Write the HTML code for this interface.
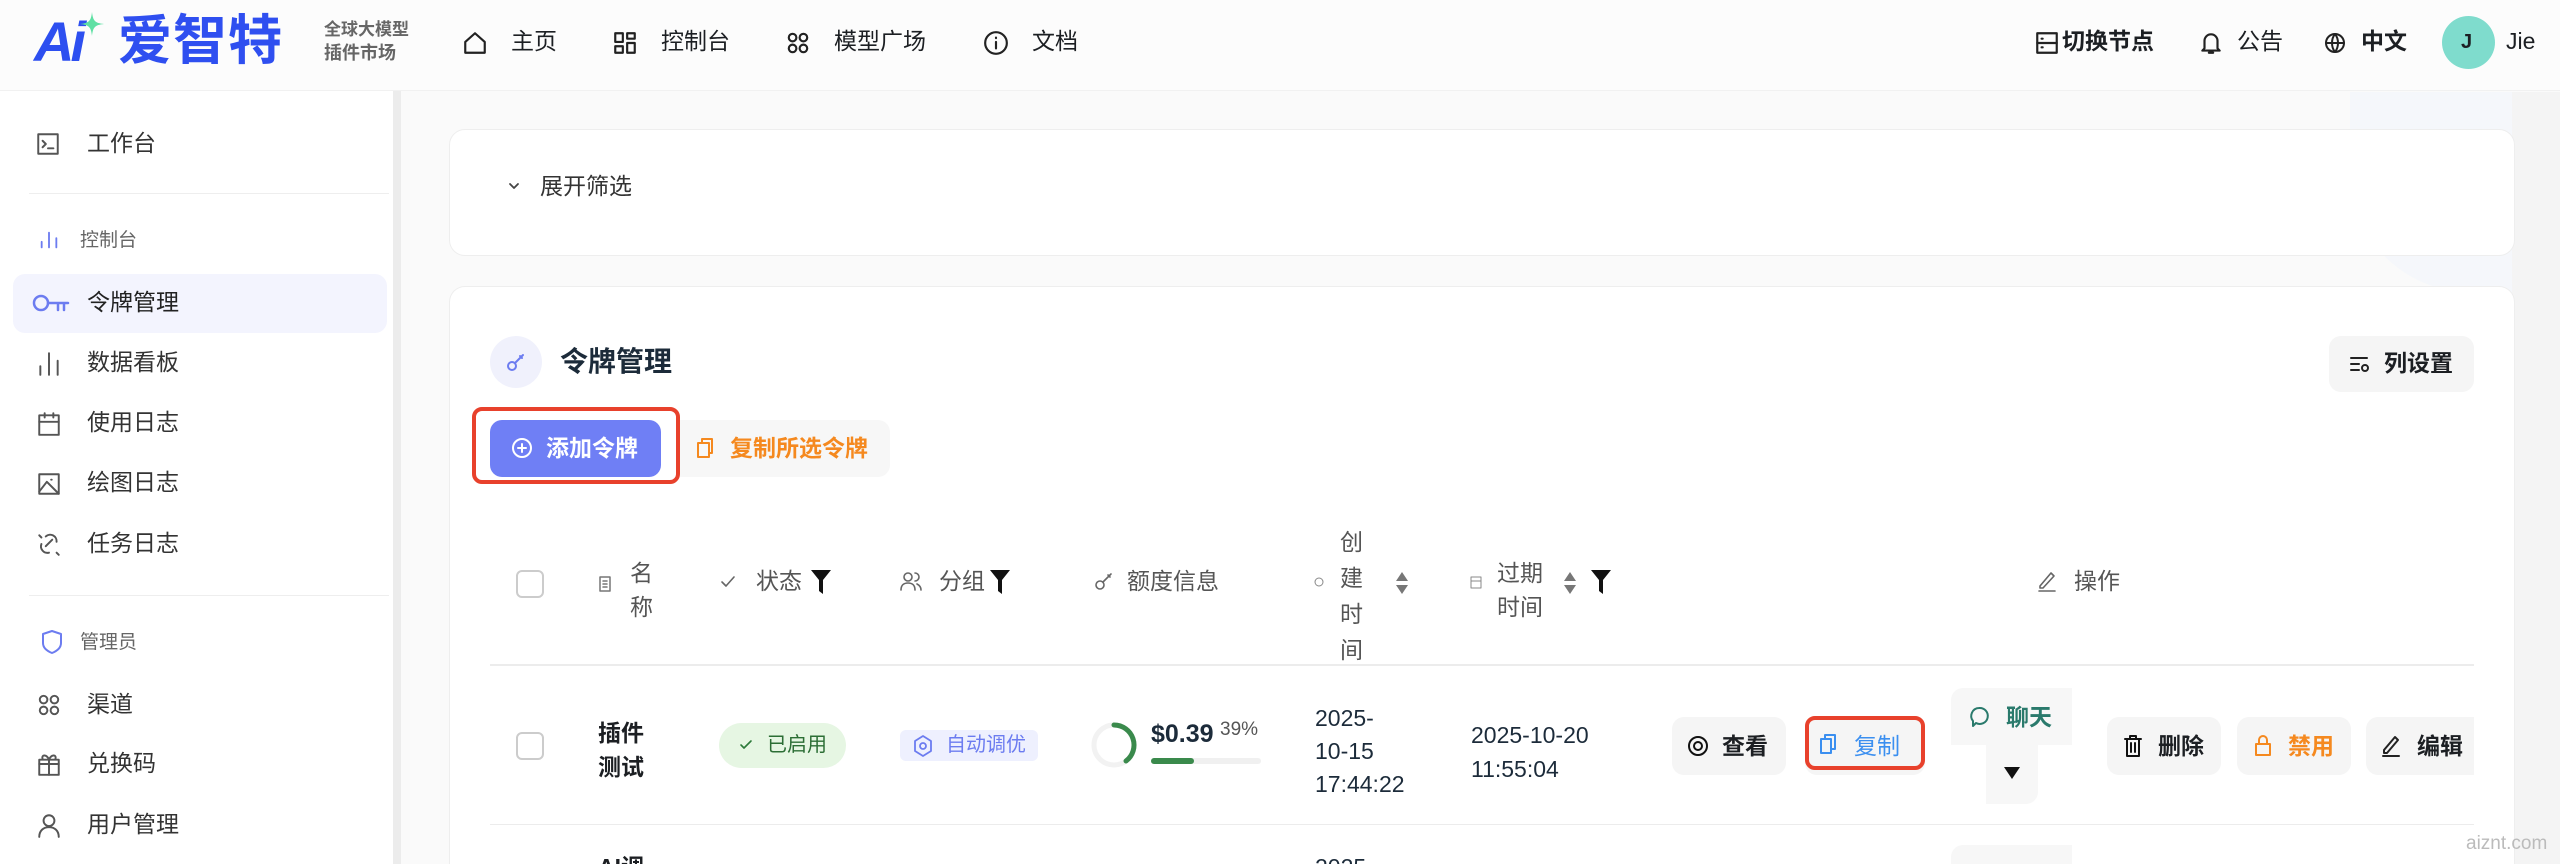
<!DOCTYPE html>
<html style="width:2560px;height:864px;overflow:hidden"><head><meta charset="utf-8"><style>
*{margin:0;padding:0;box-sizing:border-box}
body{width:2560px;height:864px;overflow:hidden;background:#fafafa;font-family:"Liberation Sans","Noto Sans CJK SC",sans-serif;color:#1c1f23;position:relative}
.a{position:absolute}
.t{position:absolute;font-size:23px;line-height:1;white-space:nowrap}
svg{position:absolute;fill:none;stroke-linecap:round;stroke-linejoin:round}
.btn{position:absolute;background:#f5f5f5;border-radius:12px}
</style></head><body>
<!-- header -->
<div class="a" style="left:0;top:0;width:2560px;height:91px;background:#fcfcfc;border-bottom:1px solid #f1f1f1"></div>
<div class="t" style="left:34px;top:14px;font-size:56px;font-weight:bold;font-style:italic;color:#2d4ff0;letter-spacing:-4px">Ai</div>
<svg style="left:80px;top:12px" width="24" height="24" viewBox="0 0 24 24"><path d="M12 0 C13 9 15 11 24 12 C15 13 13 15 12 24 C11 15 9 13 0 12 C9 11 11 9 12 0Z" fill="#5fe0a4" stroke="none"/></svg>
<div class="t" style="left:118px;top:14px;font-size:54px;font-weight:bold;color:#2f4ff0;letter-spacing:1px">爱智特</div>
<div class="t" style="left:324px;top:21px;font-size:17px;color:#666;font-weight:bold">全球大模型</div>
<div class="t" style="left:324px;top:44px;font-size:18px;color:#666;font-weight:bold">插件市场</div>
<svg style="left:462px;top:30px" width="26" height="26" viewBox="0 0 24 24" stroke="#222" stroke-width="2"><path d="M3 11 12 3l9 8v10H3z"/></svg>
<div class="t" style="left:511px;top:30px">主页</div>
<svg style="left:612px;top:30px" width="26" height="26" viewBox="0 0 24 24" stroke="#222" stroke-width="2"><rect x="3" y="3" width="7" height="8"/><rect x="14" y="3" width="7" height="5"/><rect x="3" y="15" width="7" height="6"/><rect x="14" y="12" width="7" height="9"/></svg>
<div class="t" style="left:661px;top:30px">控制台</div>
<svg style="left:785px;top:30px" width="26" height="26" viewBox="0 0 24 24" stroke="#222" stroke-width="2"><circle cx="7" cy="7" r="3.5"/><circle cx="17" cy="7" r="3.5"/><circle cx="7" cy="17" r="3.5"/><circle cx="17" cy="17" r="3.5"/></svg>
<div class="t" style="left:834px;top:30px">模型广场</div>
<svg style="left:983px;top:30px" width="26" height="26" viewBox="0 0 24 24" stroke="#222" stroke-width="2"><circle cx="12" cy="12" r="10"/><path d="M12 11v6M12 7v.5"/></svg>
<div class="t" style="left:1032px;top:30px">文档</div>
<svg style="left:2034px;top:30px" width="26" height="26" viewBox="0 0 24 24" stroke="#222" stroke-width="2"><rect x="3" y="3" width="18" height="18"/><path d="M3 12h18M7 8h1M7 16h1"/></svg>
<div class="t" style="left:2062px;top:30px;font-weight:bold">切换节点</div>
<svg style="left:2198px;top:29px" width="26" height="28" viewBox="0 0 24 24" stroke="#222" stroke-width="2"><path d="M6 17V10a6 6 0 0 1 12 0v7l2 2H4z M10 21h4"/></svg>
<div class="t" style="left:2237px;top:30px">公告</div>
<svg style="left:2323px;top:31px" width="24" height="24" viewBox="0 0 24 24" stroke="#222" stroke-width="2"><circle cx="12" cy="12" r="9"/><path d="M3 12h18M12 3c-4 5-4 13 0 18M12 3c4 5 4 13 0 18"/></svg>
<div class="t" style="left:2361px;top:30px;font-weight:bold">中文</div>
<div class="a" style="left:2442px;top:16px;width:53px;height:53px;border-radius:50%;background:#7fdccd"></div>
<div class="t" style="left:2461px;top:32px;font-size:20px;font-weight:bold">J</div>
<div class="t" style="left:2506px;top:30px">Jie</div>
<!-- sidebar -->
<div class="a" style="left:0;top:91px;width:401px;height:773px;background:#fff;border-right:8px solid #ececec"></div>
<div class="a" style="left:2350px;top:92px;width:210px;height:200px;background:#f5f7fb;border-radius:0 0 0 120px"></div>
<div class="a" style="left:2512px;top:92px;width:48px;height:772px;background:#f4f4f4"></div>
<svg style="left:35px;top:131px" width="26" height="26" viewBox="0 0 24 24" stroke="#555" stroke-width="1.8"><rect x="3" y="3" width="18" height="18"/><path d="M7 9l3 3-3 3M12 16h5"/></svg>
<div class="t" style="left:87px;top:132px;color:#333">工作台</div>
<div class="a" style="left:29px;top:193px;width:360px;height:1px;background:#eee"></div>
<svg style="left:38px;top:229px" width="22" height="22" viewBox="0 0 24 24" stroke="#6c7cf0" stroke-width="2"><path d="M4 20v-6M12 20V4M20 20v-10"/></svg>
<div class="t" style="left:80px;top:231px;font-size:19px;color:#666">控制台</div>
<div class="a" style="left:13px;top:274px;width:374px;height:59px;background:#f3f4fe;border-radius:12px"></div>
<svg style="left:32px;top:291px" width="38" height="26" viewBox="0 0 38 26" stroke="#6c7cf0" stroke-width="2.5"><circle cx="9" cy="12" r="7"/><path d="M16 12h20M26 12v7M32 12v7"/></svg>
<div class="t" style="left:87px;top:291px;color:#222">令牌管理</div>
<svg style="left:36px;top:351px" width="26" height="26" viewBox="0 0 24 24" stroke="#555" stroke-width="1.8"><path d="M4 22v-8M12 22V2M20 22V9"/></svg>
<div class="t" style="left:87px;top:351px;color:#333">数据看板</div>
<svg style="left:36px;top:411px" width="26" height="26" viewBox="0 0 24 24" stroke="#555" stroke-width="1.8"><rect x="3" y="4" width="18" height="18"/><path d="M3 10h18M8 2v4M16 2v4"/></svg>
<div class="t" style="left:87px;top:411px;color:#333">使用日志</div>
<svg style="left:36px;top:471px" width="26" height="26" viewBox="0 0 24 24" stroke="#555" stroke-width="1.8"><rect x="3" y="3" width="18" height="18"/><path d="M3 19l7-9 11 11M14 8h.5"/></svg>
<div class="t" style="left:87px;top:471px;color:#333">绘图日志</div>
<svg style="left:36px;top:531px" width="26" height="26" viewBox="0 0 24 24" stroke="#555" stroke-width="1.8"><path d="M9 5a6 6 0 0 1 10 5M5 12a6 6 0 0 0 7 8M9 14l6-6M3 4l2 2M19 20l2 2"/></svg>
<div class="t" style="left:87px;top:532px;color:#333">任务日志</div>
<div class="a" style="left:29px;top:595px;width:360px;height:1px;background:#eee"></div>
<svg style="left:40px;top:629px" width="24" height="26" viewBox="0 0 24 26" stroke="#6c7cf0" stroke-width="2"><path d="M12 2l9 3v9c0 5-4 8-9 10-5-2-9-5-9-10V5z"/></svg>
<div class="t" style="left:80px;top:633px;font-size:19px;color:#666">管理员</div>
<svg style="left:36px;top:692px" width="26" height="26" viewBox="0 0 24 24" stroke="#555" stroke-width="1.8"><circle cx="7" cy="7" r="3.5"/><circle cx="17" cy="7" r="3.5"/><circle cx="7" cy="17" r="3.5"/><circle cx="17" cy="17" r="3.5"/></svg>
<div class="t" style="left:87px;top:693px;color:#333">渠道</div>
<svg style="left:36px;top:751px" width="26" height="26" viewBox="0 0 24 24" stroke="#555" stroke-width="1.8"><rect x="3" y="8" width="18" height="14"/><path d="M3 12h18M12 8v14M12 8c-2-5-7-5-6-1M12 8c2-5 7-5 6-1"/></svg>
<div class="t" style="left:87px;top:752px;color:#333">兑换码</div>
<svg style="left:36px;top:811px" width="26" height="28" viewBox="0 0 24 24" stroke="#555" stroke-width="1.8"><circle cx="12" cy="8" r="5"/><path d="M3 23c0-6 4-9 9-9s9 3 9 9"/></svg>
<div class="t" style="left:87px;top:813px;color:#333">用户管理</div>
<!-- card 1 -->
<div class="a" style="left:449px;top:129px;width:2066px;height:127px;background:#fff;border:1px solid #eee;border-radius:16px"></div>
<svg style="left:507px;top:179px" width="14" height="14" viewBox="0 0 14 14" stroke="#444" stroke-width="1.8"><path d="M3 5l4 4 4-4"/></svg>
<div class="t" style="left:540px;top:175px;color:#333">展开筛选</div>
<!-- card 2 -->
<div class="a" style="left:449px;top:286px;width:2066px;height:578px;background:#fff;border:1px solid #eee;border-bottom:none;border-radius:16px 16px 0 0"></div>
<div class="a" style="left:490px;top:336px;width:52px;height:52px;border-radius:50%;background:#f0f1fc"></div>
<svg style="left:504px;top:350px" width="24" height="24" viewBox="0 0 24 24" stroke="#6c7cf0" stroke-width="2"><circle cx="8" cy="16" r="4"/><path d="M11 13l8-8M16 6l2 2"/></svg>
<div class="t" style="left:560px;top:348px;font-size:28px;font-weight:bold;color:#1c2b3a">令牌管理</div>
<div class="btn" style="left:2329px;top:336px;width:145px;height:56px"></div>
<svg style="left:2348px;top:352px" width="24" height="24" viewBox="0 0 24 24" stroke="#222" stroke-width="2"><path d="M3 6h16M3 12h8M3 18h8"/><circle cx="17" cy="16" r="3"/></svg>
<div class="t" style="left:2384px;top:352px;font-weight:bold">列设置</div>
<div class="a" style="left:472px;top:407px;width:208px;height:77px;border:4px solid #e8412c;border-radius:10px"></div>
<div class="a" style="left:490px;top:420px;width:171px;height:57px;background:#6f7ff5;border-radius:12px"></div>
<svg style="left:510px;top:436px" width="24" height="24" viewBox="0 0 24 24" stroke="#fff" stroke-width="2"><circle cx="12" cy="12" r="9"/><path d="M12 8v8M8 12h8"/></svg>
<div class="t" style="left:546px;top:437px;color:#fff;font-weight:bold">添加令牌</div>
<div class="a" style="left:680px;top:420px;width:210px;height:57px;background:#f7f7f7;border-radius:0 12px 12px 0"></div>
<svg style="left:694px;top:436px" width="22" height="24" viewBox="0 0 22 24" stroke="#f5891f" stroke-width="2"><rect x="4" y="7" width="11" height="14"/><path d="M8 7V3h10v14h-3"/></svg>
<div class="t" style="left:730px;top:437px;color:#f5891f;font-weight:bold">复制所选令牌</div>
<!-- table header -->
<div class="a" style="left:516px;top:570px;width:28px;height:28px;border:2px solid #ccc;border-radius:6px"></div>
<svg style="left:598px;top:575px" width="14" height="18" viewBox="0 0 14 18" stroke="#777" stroke-width="1.5"><rect x="2" y="2" width="10" height="14"/><path d="M5 6h4M5 9h4M5 12h4"/></svg>
<div class="t" style="left:630px;top:556px;color:#555;line-height:34px">名<br>称</div>
<svg style="left:719px;top:573px" width="18" height="18" viewBox="0 0 18 18" stroke="#666" stroke-width="1.6"><path d="M3 9l4 4 8-9"/></svg>
<div class="t" style="left:756px;top:570px;color:#555">状态</div>
<svg style="left:810px;top:569px" width="22" height="26" viewBox="0 0 22 26"><path d="M1 1h20l-8 10v14l-4-3V11z" fill="#111" stroke="none"/></svg>
<svg style="left:900px;top:570px" width="22" height="22" viewBox="0 0 22 22" stroke="#666" stroke-width="1.6"><circle cx="8" cy="7" r="4"/><path d="M1 20c0-5 3-7 7-7s7 2 7 7M15 3a4 4 0 0 1 0 8M17 14c2 1 4 3 4 6"/></svg>
<div class="t" style="left:939px;top:570px;color:#555">分组</div>
<svg style="left:989px;top:569px" width="22" height="26" viewBox="0 0 22 26"><path d="M1 1h20l-8 10v14l-4-3V11z" fill="#111" stroke="none"/></svg>
<svg style="left:1094px;top:571px" width="20" height="20" viewBox="0 0 20 20" stroke="#666" stroke-width="1.6"><circle cx="6" cy="14" r="4"/><path d="M9 11l8-8M14 4l2 2"/></svg>
<div class="t" style="left:1127px;top:570px;color:#555">额度信息</div>
<svg style="left:1314px;top:577px" width="10" height="10" viewBox="0 0 10 10" stroke="#888" stroke-width="1"><circle cx="5" cy="5" r="4"/></svg>
<div class="t" style="left:1340px;top:524px;color:#555;line-height:36px">创<br>建<br>时<br>间</div>
<svg style="left:1394px;top:570px" width="16" height="26" viewBox="0 0 16 26"><path d="M8 2l6 9H2zM8 24l6-9H2z" fill="#777"/></svg>
<svg style="left:1470px;top:575px" width="12" height="14" viewBox="0 0 12 14" stroke="#888" stroke-width="1"><rect x="1" y="2" width="10" height="11"/><path d="M1 6h10"/></svg>
<div class="t" style="left:1497px;top:556px;color:#555;line-height:34px">过期<br>时间</div>
<svg style="left:1562px;top:570px" width="16" height="26" viewBox="0 0 16 26"><path d="M8 2l6 9H2zM8 24l6-9H2z" fill="#777"/></svg>
<svg style="left:1590px;top:569px" width="22" height="26" viewBox="0 0 22 26"><path d="M1 1h20l-8 10v14l-4-3V11z" fill="#111" stroke="none"/></svg>
<svg style="left:2036px;top:570px" width="22" height="22" viewBox="0 0 22 22" stroke="#666" stroke-width="1.6"><path d="M4 16L15 3l3 3L7 18H4zM3 21h16"/></svg>
<div class="t" style="left:2074px;top:570px;color:#555">操作</div>
<div class="a" style="left:490px;top:664px;width:1984px;height:2px;background:#ececec"></div>
<!-- row 1 -->
<div class="a" style="left:516px;top:732px;width:28px;height:28px;border:2px solid #ccc;border-radius:6px"></div>
<div class="t" style="left:598px;top:716px;font-weight:bold;line-height:34px">插件<br>测试</div>
<div class="a" style="left:719px;top:723px;width:127px;height:45px;border-radius:23px;background:#e6f6e3"></div>
<svg style="left:738px;top:737px" width="16" height="16" viewBox="0 0 16 16" stroke="#2c7a3a" stroke-width="1.6"><path d="M3 8l3 3 7-7"/></svg>
<div class="t" style="left:767px;top:735px;font-size:20px;color:#2c6e35">已启用</div>
<div class="a" style="left:900px;top:730px;width:138px;height:31px;border-radius:6px;background:#eef0fe"></div>
<svg style="left:912px;top:734px" width="22" height="24" viewBox="0 0 22 24" stroke="#6c7cf0" stroke-width="1.8"><path d="M11 2l8 5v10l-8 5-8-5V7z"/><circle cx="11" cy="12" r="3"/></svg>
<div class="t" style="left:946px;top:735px;font-size:20px;color:#6c7cf0">自动调优</div>
<svg style="left:1090px;top:721px" width="48" height="48" viewBox="0 0 48 48" stroke-width="5"><circle cx="24" cy="24" r="20" stroke="#f2f2f2"/><path d="M24 4a20 20 0 0 1 12 36" stroke="#3a8a4c"/></svg>
<div class="t" style="left:1151px;top:722px;font-size:25px;font-weight:bold;color:#1c2b3a">$0.39</div>
<div class="t" style="left:1220px;top:720px;font-size:19px;color:#555">39%</div>
<div class="a" style="left:1151px;top:758px;width:110px;height:6px;background:#f0f0f0;border-radius:3px"></div>
<div class="a" style="left:1151px;top:758px;width:43px;height:6px;background:#3a8a4c;border-radius:3px"></div>
<div class="t" style="left:1315px;top:702px;color:#1c2b3a;line-height:33px">2025-<br>10-15<br>17:44:22</div>
<div class="t" style="left:1471px;top:718px;color:#1c2b3a;line-height:34px">2025-10-20<br>11:55:04</div>
<div class="btn" style="left:1672px;top:717px;width:114px;height:58px"></div>
<svg style="left:1686px;top:734px" width="24" height="24" viewBox="0 0 24 24" stroke="#111" stroke-width="2"><circle cx="12" cy="12" r="9"/><circle cx="12" cy="12" r="4"/></svg>
<div class="t" style="left:1722px;top:735px;font-weight:bold">查看</div>
<div class="btn" style="left:1805px;top:717px;width:120px;height:58px"></div>
<div class="a" style="left:1805px;top:716px;width:120px;height:54px;border:4px solid #e8412c;border-radius:10px"></div>
<svg style="left:1818px;top:732px" width="20" height="24" viewBox="0 0 20 24" stroke="#3b8ff0" stroke-width="2"><rect x="3" y="7" width="10" height="14"/><path d="M7 7V3h10v14h-4"/></svg>
<div class="t" style="left:1854px;top:735px;color:#3b8ff0">复制</div>
<div class="a" style="left:1951px;top:688px;width:121px;height:57px;background:#f7f7f7;border-radius:12px 0 0 0"></div>
<div class="a" style="left:1986px;top:745px;width:52px;height:59px;background:#f7f7f7;border-radius:0 0 12px 0"></div>
<svg style="left:1968px;top:705px" width="22" height="24" viewBox="0 0 22 24" stroke="#2a7a6c" stroke-width="2"><path d="M11 3a8 8 0 1 1-3 15l-3 3v-5A8 8 0 0 1 11 3z"/></svg>
<div class="t" style="left:2006px;top:706px;color:#2a7a6c;font-weight:bold">聊天</div>
<svg style="left:2003px;top:766px" width="18" height="14" viewBox="0 0 18 14"><path d="M1 1h16L9 13z" fill="#111"/></svg>
<div class="btn" style="left:2107px;top:717px;width:114px;height:58px"></div>
<svg style="left:2122px;top:734px" width="22" height="24" viewBox="0 0 22 24" stroke="#111" stroke-width="2"><path d="M3 5h16M8 5V2h6v3M5 5v17h12V5M9 9v9M13 9v9"/></svg>
<div class="t" style="left:2158px;top:735px;font-weight:bold">删除</div>
<div class="btn" style="left:2237px;top:717px;width:114px;height:58px"></div>
<svg style="left:2253px;top:733px" width="20" height="24" viewBox="0 0 20 24" stroke="#f5891f" stroke-width="2"><rect x="3" y="11" width="14" height="11"/><path d="M6 11V7a4 4 0 0 1 8 0v4"/></svg>
<div class="t" style="left:2288px;top:735px;color:#f5891f;font-weight:bold">禁用</div>
<div class="btn" style="left:2366px;top:717px;width:108px;height:58px;border-radius:12px 0 0 12px"></div>
<svg style="left:2380px;top:733px" width="22" height="24" viewBox="0 0 22 24" stroke="#222" stroke-width="2"><path d="M4 17L15 4l3 3L7 20H4zM3 23h16"/></svg>
<div class="t" style="left:2417px;top:735px;font-weight:bold">编辑</div>
<div class="a" style="left:490px;top:824px;width:1984px;height:1px;background:#ececec"></div>
<!-- row 2 partial -->
<div class="t" style="left:598px;top:856px;font-weight:bold">AI调</div>
<div class="t" style="left:1315px;top:856px;color:#1c2b3a">2025</div>
<div class="a" style="left:1951px;top:845px;width:121px;height:19px;background:#f7f7f7;border-radius:12px 0 0 0"></div>
<div class="t" style="left:2466px;top:834px;font-size:19px;color:#bbb">aiznt.com</div>
</body></html>
